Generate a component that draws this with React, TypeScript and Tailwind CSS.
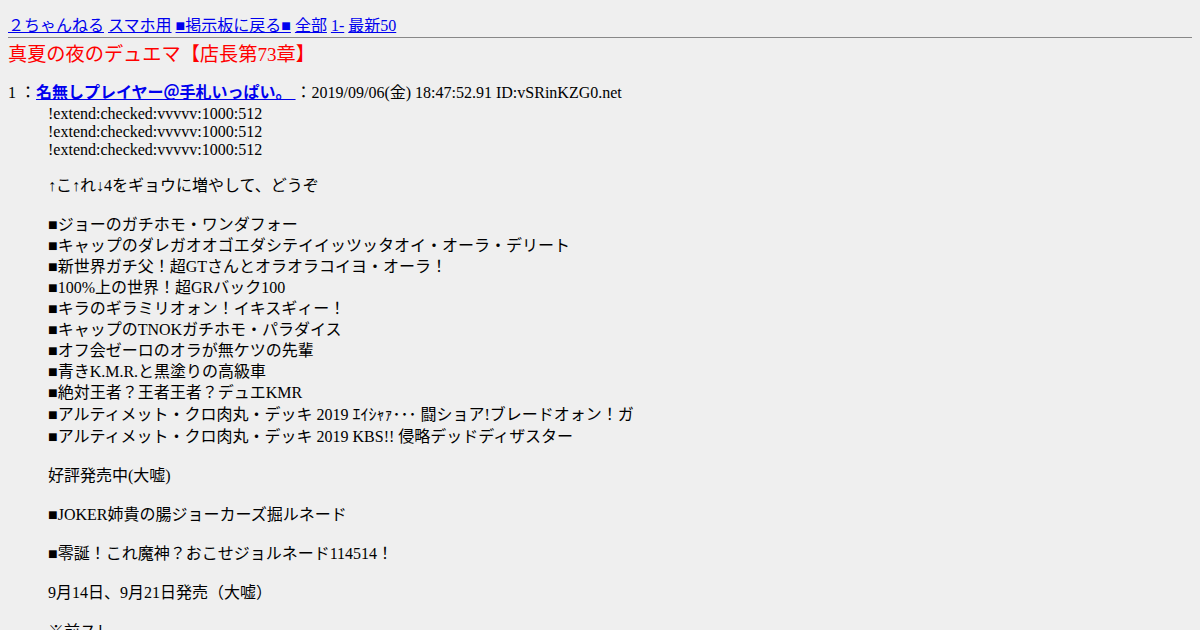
type Line = { text: string; h: "latin" | "cjk" | "tall" | "blank" | "gap" };

const L = (text: string): Line => {
    if (text === "") return { text, h: "blank" };
    if (/[\uFF61-\uFF9F]/.test(text)) return { text, h: "tall" };
    if (/^[\x00-\x7F]*$/.test(text)) return { text, h: "latin" };
    return { text, h: "cjk" };
};

const lineClass = {
    latin: "h-[18px] leading-[18px]",
    blank: "h-[18px] leading-[18px]",
    gap: "h-[16px] leading-[16px]",
    cjk: "h-[21px] leading-[21px]",
    tall: "h-[23px] leading-[23px]",
};

export default function App() {
    const lines: Line[] = [
        "!extend:checked:vvvvv:1000:512",
        "!extend:checked:vvvvv:1000:512",
        "!extend:checked:vvvvv:1000:512",
        "",
        "↑こ↑れ↓4をギョウに増やして、どうぞ",
        "",
        "■ジョーのガチホモ・ワンダフォー",
        "■キャップのダレガオオゴエダシテイイッツッタオイ・オーラ・デリート",
        "■新世界ガチ父！超GTさんとオラオラコイヨ・オーラ！",
        "■100%上の世界！超GRバック100",
        "■キラのギラミリオォン！イキスギィー！",
        "■キャップのTNOKガチホモ・パラダイス",
        "■オフ会ゼーロのオラが無ケツの先輩",
        "■青きK.M.R.と黒塗りの高級車",
        "■絶対王者？王者王者？デュエKMR",
        "■アルティメット・クロ肉丸・デッキ 2019 ｴｲｼｬｧ･･･ 闘ショア!ブレードオォン！ガ",
        "■アルティメット・クロ肉丸・デッキ 2019 KBS!! 侵略デッドディザスター",
        "",
        "好評発売中(大嘘)",
        "",
        "■JOKER姉貴の腸ジョーカーズ掘ルネード",
        "",
        "■零誕！これ魔神？おこせジョルネード114514！",
        "",
        "9月14日、9月21日発売（大嘘）",
        "",
        "※前スレ",
    ].map(L);
    // the first blank after the !extend lines sits a little tighter
    lines[3] = { text: "", h: "gap" };

    return (
        <div className="h-[630px] overflow-hidden bg-[#efefef] p-2 text-base text-black font-['Liberation_Serif','Noto_Sans_CJK_JP',serif]">
            <div className="mt-[7px] h-[21px] leading-[21px] text-[#0000ee]">
                <a href="#" className="underline">２ちゃんねる</a>{" "}
                <a href="#" className="underline">スマホ用</a>{" "}
                <a href="#" className="underline">■掲示板に戻る■</a>{" "}
                <a href="#" className="underline">全部</a>{" "}
                <a href="#" className="underline">1-</a>{" "}
                <a href="#" className="underline">最新50</a>
            </div>
            <hr className="mt-[1px] h-px border-0 bg-[#888]" />
            <h1 className="mt-[4px] h-[25px] text-[19.2px] leading-[25px] font-normal text-[#ff0000]">真夏の夜のデュエマ【店長第73章】</h1>
            <dl className="mt-[15px]">
                <dt className="h-[23px] leading-[21px]">
                    1 ：<a href="#" className="font-bold text-[#0000ee] underline">名無しプレイヤー＠手札いっぱい。 </a>：2019/09/06(金) 18:47:52.91 ID:vSRinKZG0.net
                </dt>
                <dd className="ml-10">
                    {lines.map((line, i) => (
                        <div key={i} className={lineClass[line.h]}>
                            {line.h === "blank" || line.h === "gap" ? <br /> : line.text}
                        </div>
                    ))}
                </dd>
            </dl>
        </div>
    );
}
